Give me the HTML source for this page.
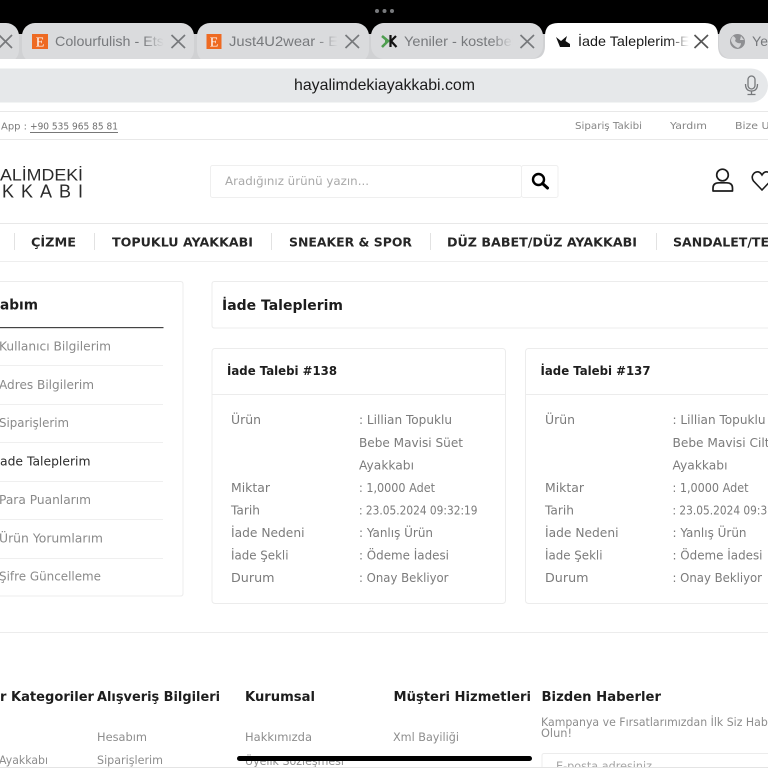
<!DOCTYPE html>
<html lang="tr">
<head>
<meta charset="utf-8">
<title>İade Taleplerim</title>
<style>
html,body{margin:0;padding:0;background:#fff;width:768px;height:768px;overflow:hidden}
svg{display:block;filter:blur(.3px)}
text{font-family:"DejaVu Sans","Liberation Sans",sans-serif;white-space:pre}
.tab{font-family:"Liberation Sans",sans-serif;font-size:14px;fill:#77797c}
.v{font-size:12.3px;fill:#7b7b7b}
.m{font-size:12.3px;fill:#8a8a8a}
.h{font-weight:bold;fill:#1d1d1d}
.n{font-weight:bold;font-size:12.5px;fill:#262626}
.t{font-size:10px;fill:#858585}
.f{font-size:11.5px;fill:#8d8d8d}
.x{stroke:#77797c;stroke-width:1.7;fill:none}
</style>
</head>
<body>
<svg width="768" height="768" viewBox="0 0 768 768" xmlns="http://www.w3.org/2000/svg">
<defs>
<linearGradient id="fade" x1="0" x2="1" y1="0" y2="0"><stop offset="0" stop-color="#dadbdd" stop-opacity="0"/><stop offset="1" stop-color="#dadbdd"/></linearGradient>
<linearGradient id="fadew" x1="0" x2="1" y1="0" y2="0"><stop offset="0" stop-color="#fff" stop-opacity="0"/><stop offset="1" stop-color="#fff"/></linearGradient>
</defs>
<rect width="768" height="768" fill="#fff"/>
<!-- top status -->
<rect width="768" height="59" fill="#000"/>
<circle cx="377" cy="11" r="2" fill="#77797c"/><circle cx="384.500" cy="11" r="2" fill="#77797c"/><circle cx="392" cy="11" r="2" fill="#77797c"/>
<!-- tab bar -->
<rect x="0" y="34" width="768" height="25" fill="#d0d1d3"/>
<rect x="-20" y="23" width="39" height="40" rx="13" fill="#dadbdd"/>
<rect x="22" y="23" width="172" height="40" rx="13" fill="#dadbdd"/>
<rect x="197" y="23" width="172" height="40" rx="13" fill="#dadbdd"/>
<rect x="371" y="23" width="172" height="36" rx="13" fill="#dadbdd"/>
<rect x="719" y="23" width="80" height="36" rx="13" fill="#dadbdd"/>
<path d="M532 59 Q545 59 545 46 V36 Q545 23 558 23 H705 Q718 23 718 36 V46 Q718 59 731 59 Z" fill="#fff"/>
<rect x="0" y="59" width="768" height="709" fill="#fff"/>
<!-- tab 1 stub -->
<path class="x" d="M-1 35 L12 48 M12 35 L-1 48" />
<!-- tab 2 -->
<rect x="32" y="34" width="16" height="15" fill="#ee6a22"/>
<text x="40" y="46.500" text-anchor="middle" style="font-family:'Liberation Serif',serif;font-size:14px;fill:#fff">E</text>
<text class="tab" x="55" y="46" textLength="116" lengthAdjust="spacingAndGlyphs">Colourfulish - Etsy</text>
<rect x="143" y="32" width="21" height="20" fill="url(#fade)"/>
<rect x="164" y="32" width="24" height="20" fill="#dadbdd"/>
<path class="x" d="M171.500 35 L185 48 M185 35 L171.500 48"/>
<!-- tab 3 -->
<rect x="206.500" y="34" width="15" height="15" fill="#ee6a22"/>
<text x="214" y="46.500" text-anchor="middle" style="font-family:'Liberation Serif',serif;font-size:14px;fill:#fff">E</text>
<text class="tab" x="229" y="46" textLength="128" lengthAdjust="spacingAndGlyphs">Just4U2wear - Etsy</text>
<rect x="317" y="32" width="21" height="20" fill="url(#fade)"/>
<rect x="338" y="32" width="24" height="20" fill="#dadbdd"/>
<path class="x" d="M345.500 35 L359 48 M359 35 L345.500 48"/>
<!-- tab 4 -->
<path d="M382 36 L388 41 L382 47 M385 41 H389" stroke="#4f9e50" stroke-width="2.600" fill="none"/>
<path d="M390.500 35 V47 M396 36 L391 41 L396.500 47" stroke="#111" stroke-width="2.200" fill="none"/>
<text class="tab" x="404" y="46" textLength="115" lengthAdjust="spacingAndGlyphs">Yeniler - kostebek</text>
<rect x="492" y="32" width="21" height="20" fill="url(#fade)"/>
<rect x="513" y="32" width="24" height="20" fill="#dadbdd"/>
<path class="x" d="M520.500 35 L534 48 M534 35 L520.500 48"/>
<!-- active tab -->
<path d="M556 37 L561 41 L567 36 L565.500 41 L570 44 L570 47 L560 47 Z" fill="#111"/>
<text class="tab" x="578" y="46" textLength="130" lengthAdjust="spacingAndGlyphs" style="fill:#1a1a1a">İade Taleplerim-Etsy</text>
<rect x="668" y="32" width="21" height="20" fill="url(#fadew)"/>
<rect x="689" y="32" width="24" height="20" fill="#fff"/>
<path class="x" d="M694.500 35 L708 48 M708 35 L694.500 48" style="stroke:#555"/>
<!-- tab 6 -->
<circle cx="737.500" cy="41.500" r="7.500" fill="#8e8f92"/>
<path d="M733 36 Q737 38 735 41 Q738 44 741 43 Q741 46 738 48 Q733 46 731 41 Q731 38 733 36 Z M741 36 L744 40 L740 40 Z" fill="#d3d4d6"/>
<text class="tab" x="752" y="46" textLength="16">Ye</text>
<!-- address bar -->
<rect x="-18" y="68.500" width="786" height="34" rx="17" fill="#e6e8ea"/>
<text x="294" y="90" textLength="181" lengthAdjust="spacingAndGlyphs" style="font-family:'Liberation Sans',sans-serif;font-size:16px;fill:#1b1b1b">hayalimdekiayakkabi.com</text>
<rect x="748" y="76" width="7" height="13" rx="3.500" fill="none" stroke="#77797c" stroke-width="1.300"/>
<path d="M745.500 84 Q745.500 91 751.500 91 Q757.500 91 757.500 84 M751.500 91 V94.500 M747.500 94.500 H755.500" fill="none" stroke="#77797c" stroke-width="1.300"/>
<!-- top info bar -->
<rect x="0" y="111" width="768" height="1" fill="#e8e8e8"/>
<rect x="0" y="139" width="768" height="1" fill="#e8e8e8"/>
<text class="t" x="1" y="129.500" textLength="26" lengthAdjust="spacingAndGlyphs" style="fill:#7a7a7a">App :</text>
<text class="t" x="30" y="129.500" textLength="88" lengthAdjust="spacingAndGlyphs" style="fill:#6f6f6f">+90 535 965 85 81</text>
<rect x="30" y="132" width="88" height="1" fill="#777"/>
<text class="t" x="575" y="129" textLength="67" lengthAdjust="spacingAndGlyphs">Sipariş Takibi</text>
<text class="t" x="670" y="129" textLength="37" lengthAdjust="spacingAndGlyphs">Yardım</text>
<text class="t" x="735" y="129" textLength="60" lengthAdjust="spacingAndGlyphs">Bize Ulaşın</text>
<!-- logo -->
<text x="0" y="180.500" textLength="83" lengthAdjust="spacingAndGlyphs" style="font-size:17px;font-family:'Liberation Sans',sans-serif;fill:#2a2a2a">ALİMDEKİ</text>
<text x="2" y="197.500" textLength="81" style="font-size:18px;font-family:'Liberation Sans',sans-serif;fill:#2a2a2a">KKABI</text>
<!-- search -->
<rect x="210.500" y="165.500" width="311" height="32" rx="2" fill="#fff" stroke="#efefef"/>
<rect x="521.500" y="165.500" width="36.500" height="32" rx="2" fill="#fff" stroke="#efefef"/>
<text x="225" y="185" textLength="144" lengthAdjust="spacingAndGlyphs" style="font-size:11.500px;fill:#a9a9a9">Aradığınız ürünü yazın...</text>
<circle cx="538.500" cy="179.500" r="5.500" fill="none" stroke="#000" stroke-width="2.400"/>
<path d="M542.500 183.500 L547.500 188" stroke="#000" stroke-width="3" stroke-linecap="round"/>
<!-- user + heart -->
<circle cx="722.500" cy="175" r="5.800" fill="none" stroke="#1c1c1c" stroke-width="1.700"/>
<path d="M713 191 V188 Q713 182.800 719 182.800 H726.500 Q732.500 182.800 732.500 188 V191 Z" fill="none" stroke="#1c1c1c" stroke-width="1.700" stroke-linejoin="round"/>
<path d="M762 190 L753.500 181 Q750.500 176.500 754.500 172.800 Q759 170 762 175 Q765 170 769.500 172.800 Q773 176.500 770.500 181 Z" fill="none" stroke="#1c1c1c" stroke-width="1.600"/>
<!-- nav -->
<rect x="0" y="223" width="768" height="1" fill="#e8e8e8"/>
<rect x="0" y="261" width="768" height="1" fill="#eeeeee"/>
<g fill="#e2e2e2"><rect x="14" y="233" width="1" height="17"/><rect x="94" y="233" width="1" height="17"/><rect x="271" y="233" width="1" height="17"/><rect x="430" y="233" width="1" height="17"/><rect x="656" y="233" width="1" height="17"/></g>
<text class="n" x="31" y="246.500" textLength="45" lengthAdjust="spacingAndGlyphs">ÇİZME</text>
<text class="n" x="112" y="246.500" textLength="141" lengthAdjust="spacingAndGlyphs">TOPUKLU AYAKKABI</text>
<text class="n" x="289" y="246.500" textLength="123" lengthAdjust="spacingAndGlyphs">SNEAKER &amp; SPOR</text>
<text class="n" x="447" y="246.500" textLength="190" lengthAdjust="spacingAndGlyphs">DÜZ BABET/DÜZ AYAKKABI</text>
<text class="n" x="673" y="246.500" textLength="128" lengthAdjust="spacingAndGlyphs">SANDALET/TERLİK</text>
<!-- side menu -->
<path d="M-2 281.500 H180.500 Q183 281.500 183 284 V593.500 Q183 596 180.500 596 H-2" fill="#fff" stroke="#ececec"/>
<text class="h" x="0" y="309.500" textLength="38" lengthAdjust="spacingAndGlyphs" style="font-size:14px">abım</text>
<rect x="0" y="327" width="163.500" height="1.200" fill="#444"/>
<g fill="#efefef"><rect x="0" y="365" width="163" height="1"/><rect x="0" y="404" width="163" height="1"/><rect x="0" y="442" width="163" height="1"/><rect x="0" y="481" width="163" height="1"/><rect x="0" y="519" width="163" height="1"/><rect x="0" y="558" width="163" height="1"/></g>
<text class="m" x="-1" y="350.500" textLength="112" lengthAdjust="spacingAndGlyphs">Kullanıcı Bilgilerim</text>
<text class="m" x="-1" y="389" textLength="95" lengthAdjust="spacingAndGlyphs">Adres Bilgilerim</text>
<text class="m" x="-1" y="427" textLength="70" lengthAdjust="spacingAndGlyphs">Siparişlerim</text>
<text class="m" x="0" y="465.500" textLength="90.500" lengthAdjust="spacingAndGlyphs" style="fill:#2b2b2b">ade Taleplerim</text>
<text class="m" x="-1" y="504" textLength="92" lengthAdjust="spacingAndGlyphs">Para Puanlarım</text>
<text class="m" x="-1" y="542.500" textLength="104" lengthAdjust="spacingAndGlyphs">Ürün Yorumlarım</text>
<text class="m" x="-1" y="580.500" textLength="102" lengthAdjust="spacingAndGlyphs">Şifre Güncelleme</text>
<!-- heading box -->
<path d="M780 281.500 H214.500 Q212 281.500 212 284 V325.500 Q212 328 214.500 328 H780" fill="#fff" stroke="#ececec"/>
<text class="h" x="222" y="310" textLength="121" lengthAdjust="spacingAndGlyphs" style="font-size:14.500px">İade Taleplerim</text>
<!-- card 1 -->
<rect x="212" y="348.500" width="293.500" height="255" rx="3" fill="#fff" stroke="#ececec"/>
<rect x="212" y="394" width="293" height="1" fill="#ececec"/>
<text class="h" x="227" y="375" textLength="110" lengthAdjust="spacingAndGlyphs" style="font-size:12.500px">İade Talebi #138</text>
<text class="v" x="231" y="424" textLength="30" lengthAdjust="spacingAndGlyphs">Ürün</text>
<text class="v" x="359" y="424" textLength="93" lengthAdjust="spacingAndGlyphs">: Lillian Topuklu</text>
<text class="v" x="359" y="447" textLength="104" lengthAdjust="spacingAndGlyphs">Bebe Mavisi Süet</text>
<text class="v" x="359" y="469.500" textLength="55" lengthAdjust="spacingAndGlyphs">Ayakkabı</text>
<text class="v" x="231" y="492" textLength="39" lengthAdjust="spacingAndGlyphs">Miktar</text>
<text class="v" x="359" y="492" textLength="76" lengthAdjust="spacingAndGlyphs">: 1,0000 Adet</text>
<text class="v" x="231" y="514.500" textLength="29" lengthAdjust="spacingAndGlyphs">Tarih</text>
<text class="v" x="359" y="514.500" textLength="118.500" lengthAdjust="spacingAndGlyphs">: 23.05.2024 09:32:19</text>
<text class="v" x="231" y="537" textLength="73.500" lengthAdjust="spacingAndGlyphs">İade Nedeni</text>
<text class="v" x="359" y="537" textLength="74" lengthAdjust="spacingAndGlyphs">: Yanlış Ürün</text>
<text class="v" x="231" y="559.500" textLength="57.500" lengthAdjust="spacingAndGlyphs">İade Şekli</text>
<text class="v" x="359" y="559.500" textLength="90" lengthAdjust="spacingAndGlyphs">: Ödeme İadesi</text>
<text class="v" x="231" y="582" textLength="43.500" lengthAdjust="spacingAndGlyphs">Durum</text>
<text class="v" x="359" y="582" textLength="89.500" lengthAdjust="spacingAndGlyphs">: Onay Bekliyor</text>
<!-- card 2 -->
<rect x="525.500" y="348.500" width="293.500" height="255" rx="3" fill="#fff" stroke="#ececec"/>
<rect x="525.500" y="394" width="293" height="1" fill="#ececec"/>
<text class="h" x="540.500" y="375" textLength="110" lengthAdjust="spacingAndGlyphs" style="font-size:12.500px">İade Talebi #137</text>
<text class="v" x="545" y="424" textLength="30" lengthAdjust="spacingAndGlyphs">Ürün</text>
<text class="v" x="672.500" y="424" textLength="93" lengthAdjust="spacingAndGlyphs">: Lillian Topuklu</text>
<text class="v" x="672.500" y="447" textLength="97" lengthAdjust="spacingAndGlyphs">Bebe Mavisi Cilt</text>
<text class="v" x="672.500" y="469.500" textLength="55" lengthAdjust="spacingAndGlyphs">Ayakkabı</text>
<text class="v" x="545" y="492" textLength="39" lengthAdjust="spacingAndGlyphs">Miktar</text>
<text class="v" x="672.500" y="492" textLength="76" lengthAdjust="spacingAndGlyphs">: 1,0000 Adet</text>
<text class="v" x="545" y="514.500" textLength="29" lengthAdjust="spacingAndGlyphs">Tarih</text>
<text class="v" x="672.500" y="514.500" textLength="118.500" lengthAdjust="spacingAndGlyphs">: 23.05.2024 09:32:19</text>
<text class="v" x="545" y="537" textLength="73.500" lengthAdjust="spacingAndGlyphs">İade Nedeni</text>
<text class="v" x="672.500" y="537" textLength="74" lengthAdjust="spacingAndGlyphs">: Yanlış Ürün</text>
<text class="v" x="545" y="559.500" textLength="57.500" lengthAdjust="spacingAndGlyphs">İade Şekli</text>
<text class="v" x="672.500" y="559.500" textLength="90" lengthAdjust="spacingAndGlyphs">: Ödeme İadesi</text>
<text class="v" x="545" y="582" textLength="43.500" lengthAdjust="spacingAndGlyphs">Durum</text>
<text class="v" x="672.500" y="582" textLength="89.500" lengthAdjust="spacingAndGlyphs">: Onay Bekliyor</text>
<!-- footer -->
<rect x="0" y="632" width="768" height="1" fill="#ececec"/>
<text class="h" x="0" y="701" textLength="94" lengthAdjust="spacingAndGlyphs" style="font-size:13.500px">r Kategoriler</text>
<text class="h" x="97" y="701" textLength="123" lengthAdjust="spacingAndGlyphs" style="font-size:13.500px">Alışveriş Bilgileri</text>
<text class="h" x="245" y="701" textLength="70" lengthAdjust="spacingAndGlyphs" style="font-size:13.500px">Kurumsal</text>
<text class="h" x="393.500" y="701" textLength="137.500" lengthAdjust="spacingAndGlyphs" style="font-size:13.500px">Müşteri Hizmetleri</text>
<text class="h" x="541.500" y="701" textLength="119.500" lengthAdjust="spacingAndGlyphs" style="font-size:13.500px">Bizden Haberler</text>
<text class="f" x="541" y="726" textLength="256" lengthAdjust="spacingAndGlyphs">Kampanya ve Fırsatlarımızdan İlk Siz Haberdar</text>
<text class="f" x="541" y="737" textLength="31" lengthAdjust="spacingAndGlyphs">Olun!</text>
<text class="f" x="97" y="741" textLength="50" lengthAdjust="spacingAndGlyphs">Hesabım</text>
<text class="f" x="245" y="741" textLength="67" lengthAdjust="spacingAndGlyphs">Hakkımızda</text>
<text class="f" x="393" y="741" textLength="66" lengthAdjust="spacingAndGlyphs">Xml Bayiliği</text>
<text class="f" x="-1" y="764" textLength="49" lengthAdjust="spacingAndGlyphs">Ayakkabı</text>
<text class="f" x="97" y="764" textLength="66" lengthAdjust="spacingAndGlyphs">Siparişlerim</text>
<text class="f" x="245" y="765" textLength="99" lengthAdjust="spacingAndGlyphs">Üyelik Sözleşmesi</text>
<rect x="542" y="753.500" width="240" height="30" rx="2" fill="#fff" stroke="#ececec"/>
<text class="f" x="556" y="770" textLength="96" lengthAdjust="spacingAndGlyphs" style="fill:#a5a5a5">E-posta adresiniz</text>
<rect x="237" y="756" width="295" height="5" rx="2.500" fill="#000"/>
<rect x="0" y="767" width="768" height="1" fill="#e4e4e4"/>
</svg>
</body>
</html>
